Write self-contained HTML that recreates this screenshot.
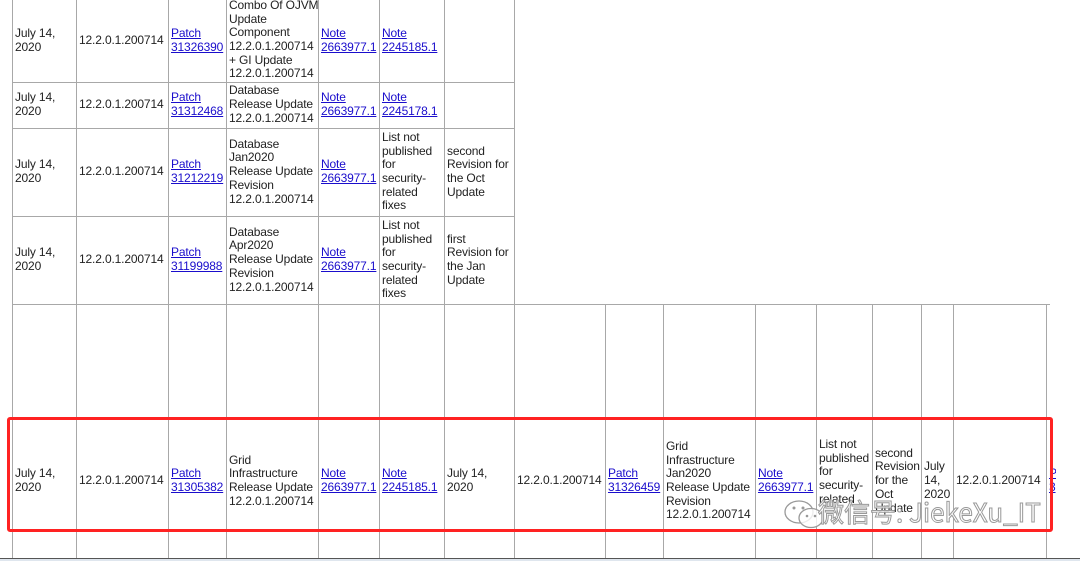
<!DOCTYPE html>
<html><head><meta charset="utf-8"><style>
html,body{margin:0;padding:0;width:1080px;height:561px;overflow:hidden;background:#fff;position:relative;font-family:"Liberation Sans","DejaVu Sans",sans-serif;font-size:12px;color:#222;}
.v{position:absolute;width:1px;background:#a8a8a8;}
.h{position:absolute;height:1px;background:#a8a8a8;}
.c{position:absolute;display:flex;align-items:center;padding-left:3px;box-sizing:border-box;line-height:13.7px;white-space:nowrap;letter-spacing:-0.15px;}
a{color:#1a0dcc;text-decoration:underline;}
.red{position:absolute;left:7px;top:417px;width:1046px;height:115px;border:3px solid #f22;box-sizing:border-box;border-radius:3px;}
.wm{position:absolute;left:818px;top:496px;font-family:"Noto Sans CJK SC","Liberation Sans",sans-serif;font-size:26px;color:rgba(255,255,255,0.85);-webkit-text-stroke:1px #999;line-height:32px;}
</style></head><body>
<div class="v" style="left:12px;top:0;height:558px"></div>
<div class="v" style="left:76px;top:0;height:558px"></div>
<div class="v" style="left:168px;top:0;height:558px"></div>
<div class="v" style="left:226px;top:0;height:558px"></div>
<div class="v" style="left:318px;top:0;height:558px"></div>
<div class="v" style="left:379px;top:0;height:558px"></div>
<div class="v" style="left:444px;top:0;height:558px"></div>
<div class="v" style="left:514px;top:0;height:558px"></div>
<div class="v" style="left:605px;top:304px;height:254px"></div>
<div class="v" style="left:663px;top:304px;height:254px"></div>
<div class="v" style="left:755px;top:304px;height:254px"></div>
<div class="v" style="left:816px;top:304px;height:254px"></div>
<div class="v" style="left:872px;top:304px;height:254px"></div>
<div class="v" style="left:921px;top:304px;height:254px"></div>
<div class="v" style="left:953px;top:304px;height:254px"></div>
<div class="v" style="left:1046px;top:304px;height:254px"></div>
<div class="h" style="left:12px;top:82px;width:503px"></div>
<div class="h" style="left:12px;top:128px;width:503px"></div>
<div class="h" style="left:12px;top:216px;width:503px"></div>
<div class="h" style="left:12px;top:304px;width:1038px"></div>
<div class="h" style="left:0;top:558px;width:1080px;background:#555"></div>
<div style="position:absolute;left:0;top:559px;width:1080px;height:2px;background:#dfe6ee"></div>

<div class="c" style="left:12px;top:0;width:64px;height:82px">July 14,<br>2020</div>
<div class="c" style="left:76px;top:0;width:92px;height:82px">12.2.0.1.200714</div>
<div class="c" style="left:168px;top:0;width:58px;height:82px"><a>Patch<br>31326390</a></div>
<div class="c" style="left:226px;top:-2px;width:92px;height:84px">Combo Of OJVM<br>Update<br>Component<br>12.2.0.1.200714<br>+ GI Update<br>12.2.0.1.200714</div>
<div class="c" style="left:318px;top:0;width:61px;height:82px"><a>Note<br>2663977.1</a></div>
<div class="c" style="left:379px;top:0;width:65px;height:82px"><a>Note<br>2245185.1</a></div>

<div class="c" style="left:12px;top:82px;width:64px;height:46px">July 14,<br>2020</div>
<div class="c" style="left:76px;top:82px;width:92px;height:46px">12.2.0.1.200714</div>
<div class="c" style="left:168px;top:82px;width:58px;height:46px"><a>Patch<br>31312468</a></div>
<div class="c" style="left:226px;top:82px;width:92px;height:46px">Database<br>Release Update<br>12.2.0.1.200714</div>
<div class="c" style="left:318px;top:82px;width:61px;height:46px"><a>Note<br>2663977.1</a></div>
<div class="c" style="left:379px;top:82px;width:65px;height:46px"><a>Note<br>2245178.1</a></div>

<div class="c" style="left:12px;top:128px;width:64px;height:88px">July 14,<br>2020</div>
<div class="c" style="left:76px;top:128px;width:92px;height:88px">12.2.0.1.200714</div>
<div class="c" style="left:168px;top:128px;width:58px;height:88px"><a>Patch<br>31212219</a></div>
<div class="c" style="left:226px;top:128px;width:92px;height:88px">Database<br>Jan2020<br>Release Update<br>Revision<br>12.2.0.1.200714</div>
<div class="c" style="left:318px;top:128px;width:61px;height:88px"><a>Note<br>2663977.1</a></div>
<div class="c" style="left:379px;top:128px;width:65px;height:88px">List not<br>published<br>for<br>security-<br>related<br>fixes</div>
<div class="c" style="left:444px;top:128px;width:70px;height:88px">second<br>Revision for<br>the Oct<br>Update</div>

<div class="c" style="left:12px;top:216px;width:64px;height:88px">July 14,<br>2020</div>
<div class="c" style="left:76px;top:216px;width:92px;height:88px">12.2.0.1.200714</div>
<div class="c" style="left:168px;top:216px;width:58px;height:88px"><a>Patch<br>31199988</a></div>
<div class="c" style="left:226px;top:216px;width:92px;height:88px">Database<br>Apr2020<br>Release Update<br>Revision<br>12.2.0.1.200714</div>
<div class="c" style="left:318px;top:216px;width:61px;height:88px"><a>Note<br>2663977.1</a></div>
<div class="c" style="left:379px;top:216px;width:65px;height:88px">List not<br>published<br>for<br>security-<br>related<br>fixes</div>
<div class="c" style="left:444px;top:216px;width:70px;height:88px">first<br>Revision for<br>the Jan<br>Update</div>

<div class="c" style="left:12px;top:426px;width:64px;height:110px">July 14,<br>2020</div>
<div class="c" style="left:76px;top:426px;width:92px;height:110px">12.2.0.1.200714</div>
<div class="c" style="left:168px;top:426px;width:58px;height:110px"><a>Patch<br>31305382</a></div>
<div class="c" style="left:226px;top:426px;width:92px;height:110px">Grid<br>Infrastructure<br>Release Update<br>12.2.0.1.200714</div>
<div class="c" style="left:318px;top:426px;width:61px;height:110px"><a>Note<br>2663977.1</a></div>
<div class="c" style="left:379px;top:426px;width:65px;height:110px"><a>Note<br>2245185.1</a></div>
<div class="c" style="left:444px;top:426px;width:70px;height:110px">July 14,<br>2020</div>
<div class="c" style="left:514px;top:426px;width:91px;height:110px">12.2.0.1.200714</div>
<div class="c" style="left:605px;top:426px;width:58px;height:110px"><a>Patch<br>31326459</a></div>
<div class="c" style="left:663px;top:426px;width:92px;height:110px">Grid<br>Infrastructure<br>Jan2020<br>Release Update<br>Revision<br>12.2.0.1.200714</div>
<div class="c" style="left:755px;top:426px;width:61px;height:110px"><a>Note<br>2663977.1</a></div>
<div class="c" style="left:816px;top:420px;width:56px;height:110px;align-items:flex-start;padding-top:18px">List not<br>published<br>for<br>security-<br>related</div>
<div class="c" style="left:872px;top:426px;width:49px;height:110px">second<br>Revision<br>for the<br>Oct<br>Update</div>
<div class="c" style="left:921px;top:426px;width:32px;height:110px">July<br>14,<br>2020</div>
<div class="c" style="left:953px;top:426px;width:93px;height:110px">12.2.0.1.200714</div>
<div class="c" style="left:1046px;top:426px;width:10px;height:110px;overflow:hidden"><a>P<br>3</a></div>

<div class="red"></div>
<svg style="position:absolute;left:783px;top:498px" width="44" height="34" viewBox="0 0 44 34"><g fill="rgba(255,255,255,0.8)" stroke="#999" stroke-width="1.3"><ellipse cx="16" cy="14" rx="14" ry="11"/><ellipse cx="28" cy="20" rx="12" ry="9.5"/></g><g fill="#999"><circle cx="11" cy="10" r="1.5"/><circle cx="20" cy="10" r="1.5"/><circle cx="24" cy="18" r="1.3"/><circle cx="32" cy="18" r="1.3"/></g></svg>
<div class="wm">微信号: JiekeXu_IT</div>
</body></html>
